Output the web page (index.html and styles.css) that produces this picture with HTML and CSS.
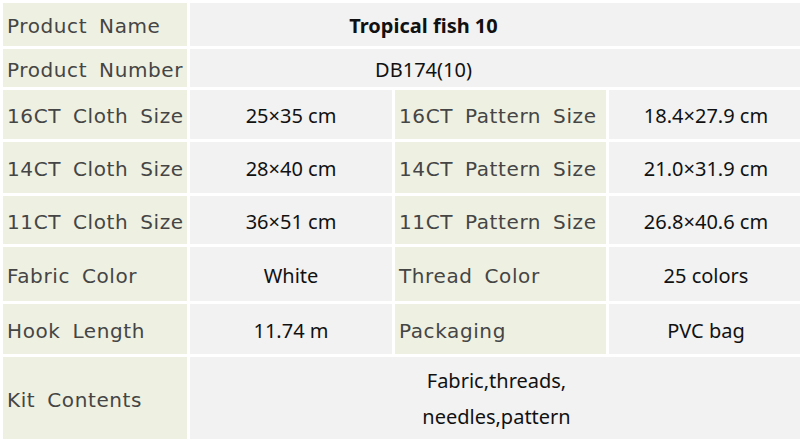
FILE: index.html
```html
<!DOCTYPE html>
<html>
<head>
<meta charset="utf-8">
<link rel="stylesheet" href="styles.css">
</head>
<body>
<table class="spec">
  <colgroup>
    <col class="c1"><col class="c2"><col class="c3"><col class="c4">
  </colgroup>
  <tr class="r1">
    <td class="lab">Product Name</td>
    <td class="val name" colspan="3">Tropical fish 10</td>
  </tr>
  <tr class="r2">
    <td class="lab">Product Number</td>
    <td class="val num" colspan="3">DB174(10)</td>
  </tr>
  <tr class="r3">
    <td class="lab">16CT Cloth Size</td>
    <td class="val">25×35 cm</td>
    <td class="lab">16CT Pattern Size</td>
    <td class="val">18.4×27.9 cm</td>
  </tr>
  <tr class="r4">
    <td class="lab">14CT Cloth Size</td>
    <td class="val">28×40 cm</td>
    <td class="lab">14CT Pattern Size</td>
    <td class="val">21.0×31.9 cm</td>
  </tr>
  <tr class="r5">
    <td class="lab">11CT Cloth Size</td>
    <td class="val">36×51 cm</td>
    <td class="lab">11CT Pattern Size</td>
    <td class="val">26.8×40.6 cm</td>
  </tr>
  <tr class="r6">
    <td class="lab">Fabric Color</td>
    <td class="val">White</td>
    <td class="lab">Thread Color</td>
    <td class="val">25 colors</td>
  </tr>
  <tr class="r7">
    <td class="lab">Hook Length</td>
    <td class="val">11.74 m</td>
    <td class="lab">Packaging</td>
    <td class="val">PVC bag</td>
  </tr>
  <tr class="r8">
    <td class="lab">Kit Contents</td>
    <td class="val kit" colspan="3">Fabric,threads,<br>needles,pattern</td>
  </tr>
</table>
</body>
</html>
```

FILE: styles.css
```css
html, body {
  margin: 0;
  padding: 0;
  background: #ffffff;
  width: 800px;
  height: 442px;
  overflow: hidden;
}

.spec {
  border-collapse: separate;
  border-spacing: 3px;
  table-layout: fixed;
  width: 803px;
}

.c1 { width: 184px; }
.c2 { width: 202px; }
.c3 { width: 211px; }
.c4 { width: 194px; }

.spec td {
  padding: 0;
  vertical-align: middle;
  white-space: nowrap;
  overflow: hidden;
  box-sizing: border-box;
}

.lab {
  background: #eef0e1;
  color: #454545;
  font-family: "DejaVu Sans", sans-serif;
  font-size: 20px;
  letter-spacing: 0.6px;
  word-spacing: 5px;
  padding-left: 4px !important;
  padding-top: 3px !important;
  text-align: left;
}

.val {
  background: #f2f2f2;
  color: #111111;
  font-family: "Noto Sans", sans-serif;
  font-size: 20px;
  text-align: center;
  padding-top: 2px !important;
}

.name {
  font-weight: 700;
  padding-right: 146px !important;
}

.num {
  padding-right: 146px !important;
}

.kit {
  line-height: 36px;
}

.r1 td { height: 43px; }
.r2 td { height: 38px; }
.r3 td { height: 49px; }
.r4 td { height: 51px; }
.r5 td { height: 48px; }
.r6 td { height: 54px; }
.r7 td { height: 50px; }
.r8 td { height: 82px; }
```
